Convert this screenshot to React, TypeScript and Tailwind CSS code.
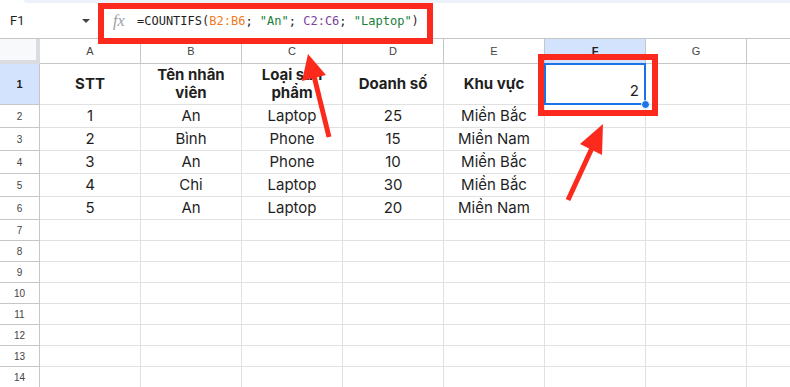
import React from "react";

const COLS = ["A", "B", "C", "D", "E", "F", "G", ""];

const HEADER = ["STT", "Tên nhân viên", "Loại sản phẩm", "Doanh số", "Khu vực"];

const DATA: string[][] = [
  ["1", "An", "Laptop", "25", "Miền Bắc"],
  ["2", "Bình", "Phone", "15", "Miền Nam"],
  ["3", "An", "Phone", "10", "Miền Bắc"],
  ["4", "Chi", "Laptop", "30", "Miền Bắc"],
  ["5", "An", "Laptop", "20", "Miền Nam"],
];

const cell = "border-r border-b border-[#e1e1e1]";

const Arrows = () => (
  <svg
    className="absolute inset-0 pointer-events-none"
    width={790}
    height={387}
    viewBox="0 0 790 387"
  >
    <line x1={329} y1={137} x2={314} y2={76} stroke="#fb2a1c" strokeWidth={5} />
    <polygon points="308,54 302,81 326,75" fill="#fb2a1c" />
    <line x1={568} y1={200} x2={592} y2={148} stroke="#fb2a1c" strokeWidth={5} />
    <polygon points="603,124 580,144 602,155" fill="#fb2a1c" />
  </svg>
);

export default function App() {
  return (
    <div className="relative w-[790px] h-[387px] overflow-hidden bg-white font-['Inter',sans-serif] text-[#1f1f1f]">
      {/* toolbar edge */}
      <div className="h-[3px] ml-[24px] bg-[#edf2fa] rounded-bl-[6px]" />

      {/* name box + formula */}
      <div className="h-[35px] flex items-center">
        <div className="w-[98px] flex items-center justify-between pl-[10px] pr-[8px]">
          <span className="text-[13px] font-['Roboto',sans-serif]">F1</span>
          <span className="w-0 h-0 border-l-[4px] border-r-[4px] border-t-[4px] border-l-transparent border-r-transparent border-t-[#444]" />
        </div>
        <span className="ml-[15px] w-[22px] text-[16px] italic text-[#9aa0a6] font-['Liberation_Serif',serif]">
          fx
        </span>
        <span className="ml-[2px] text-[12px] font-['DejaVu_Sans_Mono',monospace] whitespace-pre">
          =COUNTIFS(<span className="text-[#f07b22]">B2:B6</span>;{" "}
          <span className="text-[#188038]">"An"</span>;{" "}
          <span className="text-[#7b3fa0]">C2:C6</span>;{" "}
          <span className="text-[#188038]">"Laptop"</span>)
        </span>
      </div>

      {/* sheet grid */}
      <div className="grid grid-cols-[40px_repeat(8,101px)] grid-rows-[25px_41px_repeat(5,23px)_repeat(8,21px)] border-t border-[#c4c7c5]">
        <div className="bg-[#f8f9fa] border-r-[4px] border-b-[4px] border-[#dadce0]" />
        {COLS.map((c, k) => (
          <div
            key={k}
            className={`flex items-center justify-center text-[11px] font-['Liberation_Sans',sans-serif] border-r border-b border-[#c4c7c5] ${
              c === "F" ? "bg-[#d3e3fd] text-[#1f1f1f] font-bold" : "bg-white text-[#444]"
            }`}
          >
            {c}
          </div>
        ))}

        {/* row 1 */}
        <div className="flex items-center justify-center bg-[#d3e3fd] text-[11px] font-bold text-[#1f1f1f] font-['Liberation_Sans',sans-serif] border-r border-b border-[#c4c7c5]">
          1
        </div>
        {HEADER.map((h) => (
          <div
            key={h}
            className={`${cell} flex items-center justify-center text-center px-1 text-[15px] font-bold leading-[18px]`}
          >
            {h}
          </div>
        ))}
        <div className={`${cell} relative`}>
          <div className="absolute -left-px -top-px -right-px -bottom-px border-2 border-[#1a73e8]" />
          <span className="absolute right-[6px] bottom-[2px] text-[15px]">2</span>
          <div className="absolute -right-[5px] -bottom-[5px] w-[9px] h-[9px] rounded-full bg-[#1a73e8] border border-white" />
        </div>
        <div className={cell} />
        <div className={cell} />

        {/* data rows */}
        {DATA.map((r, i) => (
          <React.Fragment key={i}>
            <div className="flex items-center justify-center text-[10px] text-[#444] font-['Liberation_Sans',sans-serif] border-r border-b border-[#c4c7c5]">
              {i + 2}
            </div>
            {r.map((v, j) => (
              <div key={j} className={`${cell} flex items-center justify-center text-[15px]`}>
                {v}
              </div>
            ))}
            <div className={cell} />
            <div className={cell} />
            <div className={cell} />
          </React.Fragment>
        ))}

        {/* empty rows */}
        {Array.from({ length: 8 }, (_, i) => (
          <React.Fragment key={`e${i}`}>
            <div className="flex items-center justify-center text-[10px] text-[#444] font-['Liberation_Sans',sans-serif] border-r border-b border-[#c4c7c5]">
              {i + 7}
            </div>
            {COLS.map((_, k) => (
              <div key={k} className={cell} />
            ))}
          </React.Fragment>
        ))}
      </div>

      {/* annotations */}
      <div className="absolute left-[98px] top-[3px] w-[335px] h-[41px] border-[6px] border-[#fb2a1c]" />
      <div className="absolute left-[538px] top-[54px] w-[120px] h-[62px] border-[6px] border-[#fb2a1c]" />
      <Arrows />
    </div>
  );
}
